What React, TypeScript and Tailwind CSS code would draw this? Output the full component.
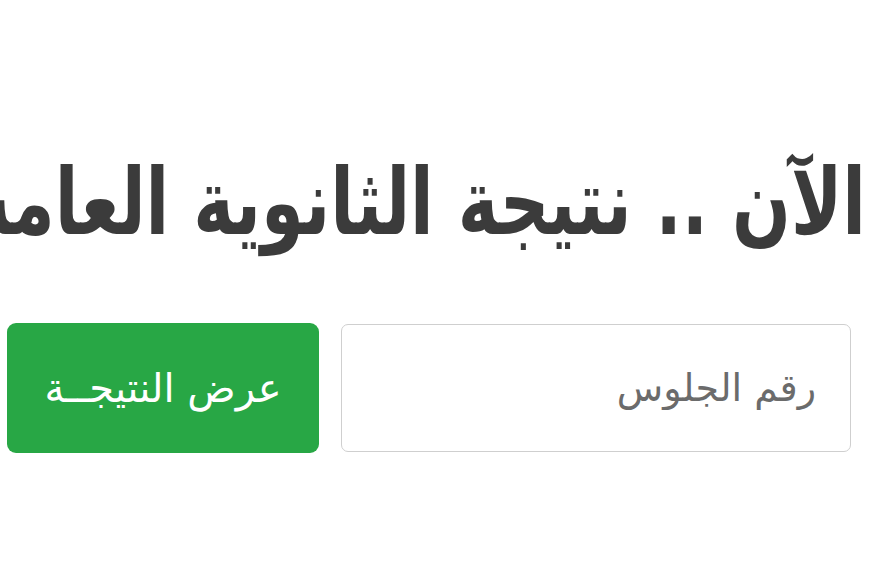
export default function App() {
  return (
    <div dir="rtl" className="w-[870px] h-[580px] bg-white overflow-hidden" style={{ fontFamily: '"DejaVu Sans", "Noto Sans", sans-serif' }}>
      <div className="pt-[138px] pr-[4px] overflow-hidden">
        <h1 className="whitespace-nowrap text-[92px] leading-[130px] font-bold text-[#3b3b3b] scale-x-[0.75] origin-right">
          الآن .. نتيجة الثانوية العامة 2024
        </h1>
      </div>
      <div className="mt-[55px] flex items-center pr-[19px] gap-[22px]">
        <input
          type="text"
          placeholder="رقم الجلوس"
          className="w-[510px] h-[128px] border border-[#cfcfcf] rounded-[7px] pr-[34px] text-[38px] text-[#555] placeholder:text-[#6b6b6b] outline-none"
        />
        <button className="w-[312px] h-[130px] bg-[#28a745] rounded-[9px] text-white text-[40px]">
          عرض النتيجــة
        </button>
      </div>
    </div>
  );
}
